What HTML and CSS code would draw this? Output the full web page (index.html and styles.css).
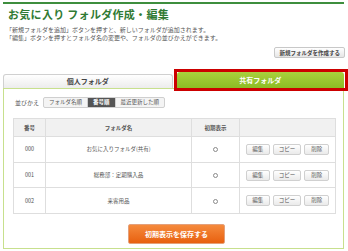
FILE: index.html
```html
<!DOCTYPE html>
<html lang="ja">
<head>
<meta charset="utf-8">
<link rel="stylesheet" href="styles.css">
</head>
<body>
<div class="page">
  <div class="head">
    <h1 class="title">お気に入り フォルダ作成・編集</h1>
    <p class="desc">「新規フォルダを追加」ボタンを押すと、新しいフォルダが追加されます。<br>「編集」ボタンを押すとフォルダ名の変更や、フォルダの並びかえができます。</p>
    <div class="actions"><button class="btn-new">新規フォルダを作成する</button></div>
  </div>
  <div class="tabs">
    <div class="tab tab-personal">個人フォルダ</div>
    <div class="tab-highlight"><div class="tab tab-shared">共有フォルダ</div></div>
  </div>
  <div class="panel">
    <div class="sort">
      <span class="sort-label">並びかえ</span>
      <div class="sort-group">
        <span class="sort-btn">フォルダ名順</span>
        <span class="sort-btn active">番号順</span>
        <span class="sort-btn">最近更新した順</span>
      </div>
    </div>
    <table class="folders">
      <thead>
        <tr><th class="c-no">番号</th><th class="c-name">フォルダ名</th><th class="c-def">初期表示</th><th class="c-act"></th></tr>
      </thead>
      <tbody>
        <tr><td>000</td><td>お気に入りフォルダ(共有)</td><td><span class="radio"></span></td><td><div class="ops"><span class="op">編集</span><span class="op">コピー</span><span class="op">削除</span></div></td></tr>
        <tr><td>001</td><td>総務部：定期購入品</td><td><span class="radio"></span></td><td><div class="ops"><span class="op">編集</span><span class="op">コピー</span><span class="op">削除</span></div></td></tr>
        <tr><td>002</td><td>来客用品</td><td><span class="radio"></span></td><td><div class="ops"><span class="op">編集</span><span class="op">コピー</span><span class="op">削除</span></div></td></tr>
      </tbody>
    </table>
    <div class="save-row"><button class="btn-save">初期表示を保存する</button></div>
  </div>
</div>
</body>
</html>
```
FILE: styles.css
```css
* { box-sizing: border-box; }
html, body { margin: 0; padding: 0; background: #fff; }
body { font-family: "Noto Sans CJK JP", "Noto Sans", sans-serif; color: #444; }
.page { width: 341px; margin: 0 0 0 3px; padding-top: 2px; }
.head { border-top: 2px solid #3e8e3e; padding: 3px 0 0 3px; }
.title { margin: 0; font-size: 11px; line-height: 15px; font-weight: bold; color: #2f7a33; padding-left: 2px; letter-spacing: 0.3px; }
.desc { margin: 4px 0 0 0; font-size: 6px; line-height: 7.5px; color: #555; }
.actions { display: flex; justify-content: flex-end; margin-top: 6px; }
.btn-new { font-family: inherit; font-size: 5.5px; font-weight: bold; color: #444; height: 11px; padding: 0 4px; border: 1px solid #c8c8c8; border-radius: 2px; background: linear-gradient(#ffffff, #e6e6e6); margin-right: -1px; }
.tabs { display: flex; align-items: flex-end; gap: 4px; margin-top: 11px; }
.tab { text-align: center; font-size: 7px; font-weight: bold; }
.tab-personal { flex: 1; height: 14px; line-height: 13px; border: 1px solid #d0d0d0; border-bottom: none; border-radius: 3px 3px 0 0; background: linear-gradient(#ffffff, #ececec); color: #444; }
.tab-highlight { flex: 1; border: 3px solid #cc0000; margin: 0 -4px -3px -3px; padding: 0 1px 0 0; }
.tab-shared { height: 16px; line-height: 16px; border-radius: 3px 3px 0 0; background: linear-gradient(#a9d13c, #8cbc24); color: #fff; }
.panel { border: 1px solid #c7e08d; height: 161px; padding: 8px 7px 0 9px; }
.sort { display: flex; align-items: center; gap: 4px; }
.sort-label { font-size: 6px; line-height: 11px; color: #555; padding-left: 2px; }
.sort-group { display: flex; border: 1px solid #cfcfcf; border-radius: 2px; background: #f4f4f4; }
.sort-btn { font-size: 5.5px; line-height: 9px; padding: 0 5px; color: #555; }
.sort-btn + .sort-btn { border-left: 1px solid #cfcfcf; }
.sort-btn.active { background: #555; color: #fff; font-weight: bold; }
.folders { border-collapse: collapse; width: 323px; margin-top: 10px; font-size: 5.5px; color: #555; }
.folders th, .folders td { border: 1px solid #dedede; text-align: center; padding: 0; }
.folders th { background: #f1f1f1; height: 18px; font-weight: bold; }
.folders td { height: 25.7px; }
.c-no { width: 32px; }
.c-name { width: 146px; }
.c-def { width: 48px; }
.radio { display: inline-block; width: 5px; height: 5px; border-radius: 50%; border: 1px solid #8a8a8a; vertical-align: middle; }
.ops { display: flex; justify-content: center; gap: 3px; }
.op { white-space: nowrap; text-align: center; font-size: 5.5px; line-height: 9px; height: 11px; padding: 0 5px; border: 1px solid #d0d0d0; border-radius: 2px; background: linear-gradient(#fff, #eaeaea); color: #555; }
.op:first-child { min-width: 24px; }
.op:last-child { min-width: 25px; }
.save-row { display: flex; justify-content: center; margin-top: 10px; }
.btn-save { font-family: inherit; width: 97px; height: 20px; border: 1px solid #e4a07a; border-radius: 2px; background: linear-gradient(#f58a3c, #e8600f); color: #fff; font-size: 7px; font-weight: bold; margin-left: 4px; }
```
